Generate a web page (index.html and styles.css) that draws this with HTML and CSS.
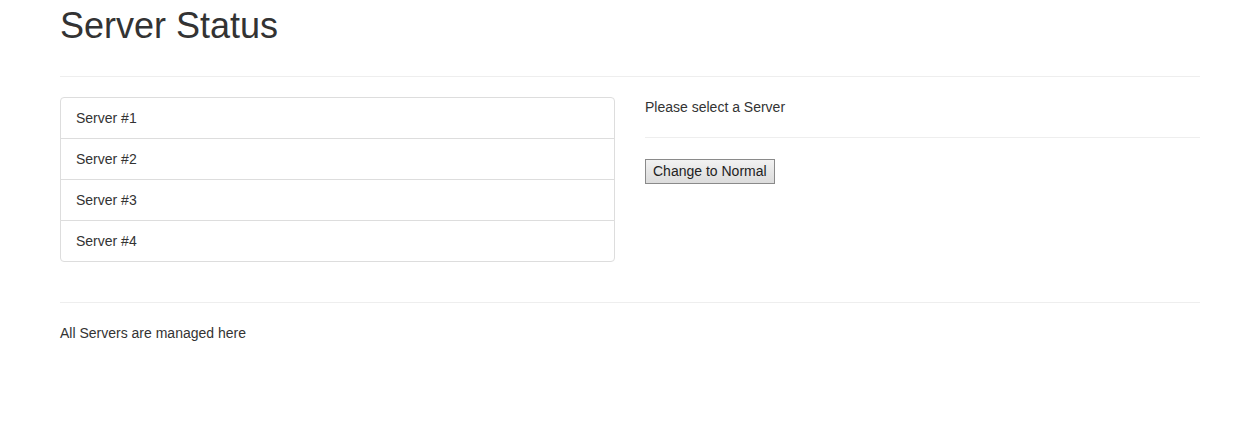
FILE: index.html
```html
<!DOCTYPE html>
<html>
<head>
<meta charset="utf-8">
<link rel="stylesheet" href="styles.css">
</head>
<body>
<div class="container">
  <h1 class="title">Server Status</h1>
  <hr class="rule">
  <div class="row">
    <ul class="list-group">
      <li class="list-item">Server #1</li>
      <li class="list-item">Server #2</li>
      <li class="list-item">Server #3</li>
      <li class="list-item">Server #4</li>
    </ul>
    <div class="detail">
      <p class="text">Please select a Server</p>
      <hr class="rule">
      <button class="btn">Change to Normal</button>
    </div>
  </div>
  <hr class="rule">
  <p class="text">All Servers are managed here</p>
</div>
</body>
</html>
```

FILE: styles.css
```css
html, body {
  margin: 0;
  padding: 0;
  background: #fff;
}
body {
  font-family: "Liberation Sans", Arial, sans-serif;
  font-size: 14px;
  line-height: 20px;
  color: #333;
}
.container {
  width: 1140px;
  margin-left: 60px;
}
.title {
  font-size: 36px;
  font-weight: 500;
  line-height: 39.6px;
  margin: 6px 0 30px;
}
.rule {
  border: 0;
  border-top: 1px solid #eee;
  margin: 20px 0;
  height: 0;
}
.row {
  display: grid;
  grid-template-columns: 555px 555px;
  column-gap: 30px;
  align-items: start;
}
.list-group {
  list-style: none;
  margin: 0 0 20px;
  padding: 0;
}
.list-item {
  padding: 10px 15px;
  border: 1px solid #ddd;
  margin-bottom: -1px;
  background: #fff;
}
.list-item:first-child {
  border-top-left-radius: 4px;
  border-top-right-radius: 4px;
}
.list-item:last-child {
  margin-bottom: 0;
  border-bottom-left-radius: 4px;
  border-bottom-right-radius: 4px;
}
.text {
  margin: 0 0 10px;
}
.btn {
  font-family: "Liberation Sans", Arial, sans-serif;
  font-size: 14px;
  line-height: 16px;
  color: #222;
  padding: 3px 7px 4px;
  border: 1px solid #8a8a8a;
  border-radius: 0;
  background: linear-gradient(#f2f2f2, #e6e6e6 50%, #dcdcdc);
  margin: 1px 0 0;
}
```
